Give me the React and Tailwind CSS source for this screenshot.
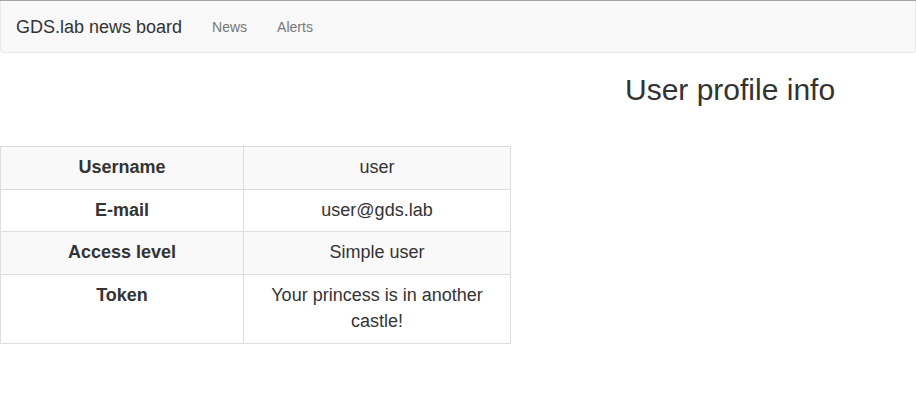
const rows = [
  { label: 'Username', value: 'user' },
  { label: 'E-mail', value: 'user@gds.lab' },
  { label: 'Access level', value: 'Simple user' },
  { label: 'Token', value: 'Your princess is in another castle!' },
]

export default function App() {
  return (
    <div className="min-h-screen bg-white border-t border-[#a3a3a3] text-[#333] font-['Liberation_Sans',Arial,sans-serif]">
      <nav className="h-[52px] bg-[#f8f8f8] border border-t-0 border-[#e7e7e7] rounded-b-[4px] flex items-center">
        <a className="px-[15px] text-[18px] leading-[20px] text-[#333]">GDS.lab news board</a>
        <a className="px-[15px] text-[14px] leading-[20px] text-[#777]">News</a>
        <a className="px-[15px] text-[14px] leading-[20px] text-[#777]">Alerts</a>
      </nav>

      <div className="pl-[625px] mt-[20px]">
        <h2 className="text-[30px] leading-[33px] font-normal">User profile info</h2>
      </div>

      <table className="mt-[40px] w-[511px] border-collapse text-[18px] leading-[25.7px]">
        <tbody>
          {rows.map((r, i) => (
            <tr key={r.label} className={i % 2 === 0 ? 'bg-[#f9f9f9]' : 'bg-white'}>
              <th className="w-[243px] border border-[#ddd] p-2 align-top text-center font-bold">{r.label}</th>
              <td className="border border-[#ddd] p-2 px-6 align-top text-center">{r.value}</td>
            </tr>
          ))}
        </tbody>
      </table>
    </div>
  )
}
